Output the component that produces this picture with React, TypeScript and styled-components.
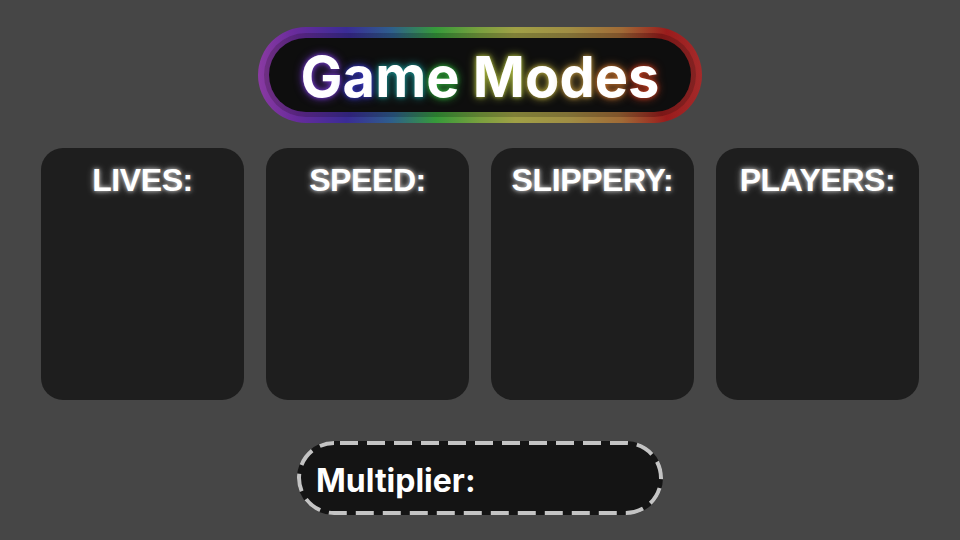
import React from "react";
import styled, { createGlobalStyle } from "styled-components";

const Global = createGlobalStyle`
  html, body { margin: 0; padding: 0; background: #464646; }
  body { width: 960px; height: 540px; overflow: hidden; }
`;

const rainbow = `linear-gradient(90deg,
  #8a3aa2 0%, #6a2c9c 8%, #3a2c96 20%, #2e5e8c 30%, #369a3a 40%,
  #7aa03e 50%, #a0a046 58%, #a08e44 70%, #a06a36 82%, #9a1c1c 92%, #a42a2a 100%)`;

const Page = styled.div`
  width: 960px;
  height: 540px;
  display: flex;
  flex-direction: column;
  align-items: center;
  padding-top: 27px;
  box-sizing: border-box;
`;

const Frame = styled.div`
  width: 444px;
  height: 96px;
  box-sizing: border-box;
  padding: 6px;
  border-radius: 48px;
  background: ${rainbow};
`;

const FrameInner = styled.div`
  height: 100%;
  box-sizing: border-box;
  padding: 5px;
  border-radius: 42px;
  background: linear-gradient(rgba(0, 0, 0, 0.2), rgba(0, 0, 0, 0.2)), ${rainbow};
`;

const Plate = styled.div`
  height: 100%;
  border-radius: 38px;
  background: #0e0e0e;
  display: flex;
  align-items: center;
  justify-content: center;
`;

const Title = styled.h1`
  margin: 0;
  font-family: Inter, "Noto Sans", sans-serif;
  font-weight: 700;
  font-size: 56px;
  line-height: 1;
  color: #ffffff;
  white-space: pre;
  letter-spacing: 0;
  transform: translateY(2px);
`;

const Glow = styled.span<{ $c: string }>`
  text-shadow: 0 0 4px ${(p) => p.$c}, 0 0 10px ${(p) => p.$c};
`;

const Cards = styled.div`
  margin-top: 25px;
  display: flex;
  gap: 22px;
`;

const Card = styled.div`
  width: 203px;
  height: 252px;
  border-radius: 22px;
  background: #1e1e1e;
  display: flex;
  justify-content: center;
  padding-top: 16px;
  box-sizing: border-box;
`;

const CardLabel = styled.div`
  font-family: "Liberation Sans", Arial, sans-serif;
  font-weight: 700;
  font-size: 32px;
  line-height: 1;
  color: #ffffff;
  letter-spacing: -0.4px;
  text-shadow: 0 0 4px rgba(255, 255, 255, 0.75), 0 0 8px rgba(255, 255, 255, 0.4);
`;

const Pill = styled.div`
  position: relative;
  margin-top: 41px;
  width: 366px;
  height: 74px;
  border-radius: 37px;
  background: #141414;
  display: flex;
  align-items: center;
  padding-left: 19px;
  box-sizing: border-box;
`;

const DashRing = styled.svg`
  position: absolute;
  inset: 0;
  width: 366px;
  height: 74px;
  pointer-events: none;
`;

const PillLabel = styled.div`
  font-family: Inter, "Noto Sans", sans-serif;
  font-weight: 700;
  font-size: 32px;
  line-height: 1;
  color: #ffffff;
  transform: translateY(3px);
`;

const letters: [string, string][] = [
  ["G", "rgba(122, 60, 216, 0.85)"],
  ["a", "rgba(58, 58, 208, 0.85)"],
  ["m", "rgba(26, 150, 150, 0.85)"],
  ["e", "rgba(48, 180, 60, 0.85)"],
  [" ", "transparent"],
  ["M", "rgba(176, 190, 64, 0.85)"],
  ["o", "rgba(190, 176, 64, 0.85)"],
  ["d", "rgba(192, 150, 64, 0.85)"],
  ["e", "rgba(208, 120, 48, 0.85)"],
  ["s", "rgba(208, 64, 32, 0.85)"],
];

const modes = ["LIVES:", "SPEED:", "SLIPPERY:", "PLAYERS:"];

export default function App() {
  return (
    <>
      <Global />
      <Page>
        <Frame>
          <FrameInner>
            <Plate>
              <Title>
                {letters.map(([ch, c], i) => (
                  <Glow key={i} $c={c}>
                    {ch}
                  </Glow>
                ))}
              </Title>
            </Plate>
          </FrameInner>
        </Frame>
        <Cards>
          {modes.map((m) => (
            <Card key={m}>
              <CardLabel>{m}</CardLabel>
            </Card>
          ))}
        </Cards>
        <Pill>
          <DashRing viewBox="0 0 366 74">
            <rect
              x="2"
              y="2"
              width="362"
              height="70"
              rx="35"
              fill="none"
              stroke="#c4c4c4"
              strokeWidth="4"
              strokeDasharray="18 9"
              strokeDashoffset="-6"
            />
          </DashRing>
          <PillLabel>Multiplier:</PillLabel>
        </Pill>
      </Page>
    </>
  );
}
